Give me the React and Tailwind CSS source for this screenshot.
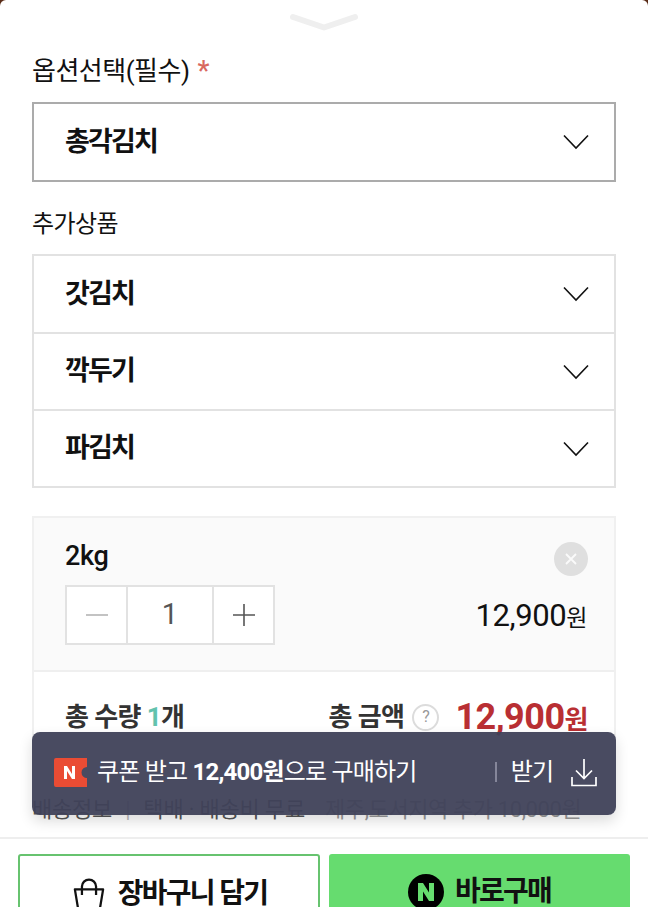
const font = { fontFamily: '"Roboto", "Noto Sans CJK KR", sans-serif' };

function Arrow() {
  return (
    <svg width="26" height="16" viewBox="0 0 26 16" fill="none" stroke="#111" strokeWidth="1.6">
      <path d="M1 1.5 L13 14 L25 1.5" />
    </svg>
  );
}

function OptionRow({ label, className = '' }) {
  return (
    <div className={`flex items-center justify-between h-[76px] pl-[31px] pr-[25px] ${className}`}>
      <span className="text-[27px] font-bold text-[#111] tracking-[-1.8px]">{label}</span>
      <Arrow />
    </div>
  );
}

export default function App() {
  const extras = ['갓김치', '깍두기', '파김치'];

  return (
    <div className="relative flex flex-col h-[907px] w-[648px] overflow-hidden bg-[#5a2c18]" style={font}>
      <div className="flex-1 min-h-0 overflow-hidden bg-white rounded-t-[6px] px-[32px]">
        <div className="flex justify-center pt-[13px]">
          <svg width="70" height="18" viewBox="0 0 70 18" fill="none" stroke="#efefef" strokeWidth="6" strokeLinecap="round" strokeLinejoin="round">
            <path d="M4 4 L35 14.5 L66 4" />
          </svg>
        </div>
        <div className="mt-[20px] flex items-center h-[40px] text-[26px] tracking-[-0.5px] text-[#111] leading-none">
          옵션선택(필수)
          <span className="ml-[8px] text-[#d9685f] text-[27px] font-medium">*</span>
        </div>
        <div className="mt-[11px] border-2 border-[#ababab]">
          <OptionRow label="총각김치" />
        </div>
        <div className="mt-[24px] h-[36px] flex items-center text-[24px] tracking-[-0.6px] text-[#111] leading-none">추가상품</div>
        <div className="mt-[12px] border-2 border-[#e2e2e2]">
          {extras.map((item, i) => (
            <OptionRow key={item} label={item} className={i > 0 ? 'border-t-2 border-[#e2e2e2] h-[77px]' : 'h-[76px]'} />
          ))}
        </div>

        <div className="mt-[28px] border-2 border-[#f0f0f0] h-[262px]">
          <div className="relative h-[154px] bg-[#fafafa] border-b-2 border-[#efefef] pl-[31px] pr-[27px]">
            <div className="pt-[22px] text-[27px] font-medium text-[#111] leading-[32px] tracking-[-0.3px]">2kg</div>
            <button className="absolute right-[26px] top-[24px] flex items-center justify-center w-[34px] h-[34px] rounded-full bg-[#dfdfdf]">
              <svg width="14" height="14" viewBox="0 0 14 14" stroke="#fafafa" strokeWidth="1.8">
                <path d="M2 2 L12 12 M12 2 L2 12" />
              </svg>
            </button>
            <div className="mt-[13px] flex items-center justify-between">
              <div className="flex h-[60px] w-[210px] border-2 border-[#e2e2e2] bg-white">
                <div className="flex items-center justify-center w-[61px] border-r-2 border-[#e2e2e2]">
                  <svg width="22" height="2" viewBox="0 0 22 2"><path d="M0 1 H22" stroke="#b5b5b5" strokeWidth="1.6" /></svg>
                </div>
                <div className="flex items-center justify-center w-[86px] border-r-2 border-[#e2e2e2] text-[29px] text-[#555]">1</div>
                <div className="flex flex-1 items-center justify-center">
                  <svg width="22" height="22" viewBox="0 0 22 22"><path d="M0 11 H22 M11 0 V22" stroke="#555" strokeWidth="1.6" /></svg>
                </div>
              </div>
              <div className="text-[#111] text-[31px] leading-none tracking-[-0.4px]">
                12,900<span className="text-[23px] tracking-[-0.5px]">원</span>
              </div>
            </div>
          </div>
          <div className="flex items-center justify-between pl-[31px] pr-[26px] pt-[25px]">
            <div className="text-[26px] font-bold text-[#333] leading-[40px] tracking-[-0.6px]">
              총 수량 <span className="text-[#62c2ad]">1</span>개
            </div>
            <div className="flex items-center">
              <span className="text-[26px] font-bold text-[#333] leading-[40px] tracking-[-0.6px]">총 금액</span>
              <span className="ml-[8px] flex items-center justify-center w-[27px] h-[27px] rounded-full border-2 border-[#dcdcdc] text-[16px] text-[#999]">?</span>
              <span className="ml-[16px] text-[36px] font-bold text-[#b92f33] leading-none tracking-[-0.5px]">
                12,900<span className="text-[26px]">원</span>
              </span>
            </div>
          </div>
        </div>

        <div className="mt-[17px] text-[22px] leading-[30px] whitespace-nowrap text-[#555] tracking-[-0.2px]">
          배송정보<span className="mx-[13px] text-[#bbb]">|</span>택배 · 배송비 무료
          <span className="ml-[20px] text-[#999] tracking-[-0.4px]">제주,도서지역 추가 10,000원</span>
        </div>
      </div>

      {/* 쿠폰 배너 */}
      <div className="absolute left-[32px] top-[732px] flex items-center justify-between w-[584px] h-[83px] pb-[3px] pl-[22px] pr-[19px] rounded-[8px] bg-[#3f4159]/95 shadow-[0_6px_14px_rgba(0,0,0,0.14)] text-white">
        <div className="flex items-center">
          <svg width="33" height="29" viewBox="0 0 33 29">
            <path d="M2 0 H33 V9 A5.5 5.5 0 0 0 33 20 V29 H2 A2 2 0 0 1 0 27 V2 A2 2 0 0 1 2 0 Z" fill="#ea4c34" />
            <path d="M10 21 V8 H13 L18 16 V8 H21 V21 H18 L13 13 V21 Z" fill="#fff" />
          </svg>
          <span className="ml-[10px] text-[24px] tracking-[-0.8px] whitespace-nowrap">
            쿠폰 받고 <b className="font-bold">12,400원</b>으로 구매하기
          </span>
        </div>
        <div className="flex items-center">
          <span className="w-[2px] h-[20px] bg-[#85869a]" />
          <span className="ml-[14px] text-[24px] tracking-[-1px]">받기</span>
          <svg className="ml-[18px]" width="26" height="29" viewBox="0 0 26 29" fill="none" stroke="#fff" strokeWidth="1.7">
            <path d="M13 1 V20 M5 12.5 L13 20.5 L21 12.5 M1 19 V27.5 H25 V19" />
          </svg>
        </div>
      </div>

      <div className="shrink-0 h-[70px] overflow-hidden bg-white border-t-2 border-[#eeeeee] flex gap-[9px] pl-[18px] pr-[18px] pt-[15px]">
        <button className="flex items-start justify-center gap-[13px] w-[302px] h-[70px] pl-[2px] pt-[18px] border-2 border-[#67c36f] rounded-[3px] bg-white">
          <svg className="mt-[3px]" width="32" height="38" viewBox="0 0 34 38" fill="none" stroke="#111" strokeWidth="2.4" strokeLinejoin="round">
            <path d="M2 12 H32 L28 36 H6 Z" />
            <path d="M9.5 18 V9 A7.5 7.5 0 0 1 24.5 9 V18" />
          </svg>
          <span className="text-[28px] font-bold text-[#111] tracking-[-1.7px] leading-[40px]">장바구니 담기</span>
        </button>
        <button className="flex items-start justify-center gap-[11px] w-[301px] h-[70px] pt-[20px] rounded-[3px] bg-[#66dc6f]">
          <svg width="36" height="36" viewBox="0 0 36 36">
            <circle cx="18" cy="18" r="18" fill="#000" />
            <path d="M10 27 V9 H15 L21 18.5 V9 H26 V27 H21 L15 17.5 V27 Z" fill="#66dc6f" />
          </svg>
          <span className="-mt-[2px] text-[28px] font-bold text-[#111] tracking-[-1.7px] leading-[40px]">바로구매</span>
        </button>
      </div>
    </div>
  );
}
